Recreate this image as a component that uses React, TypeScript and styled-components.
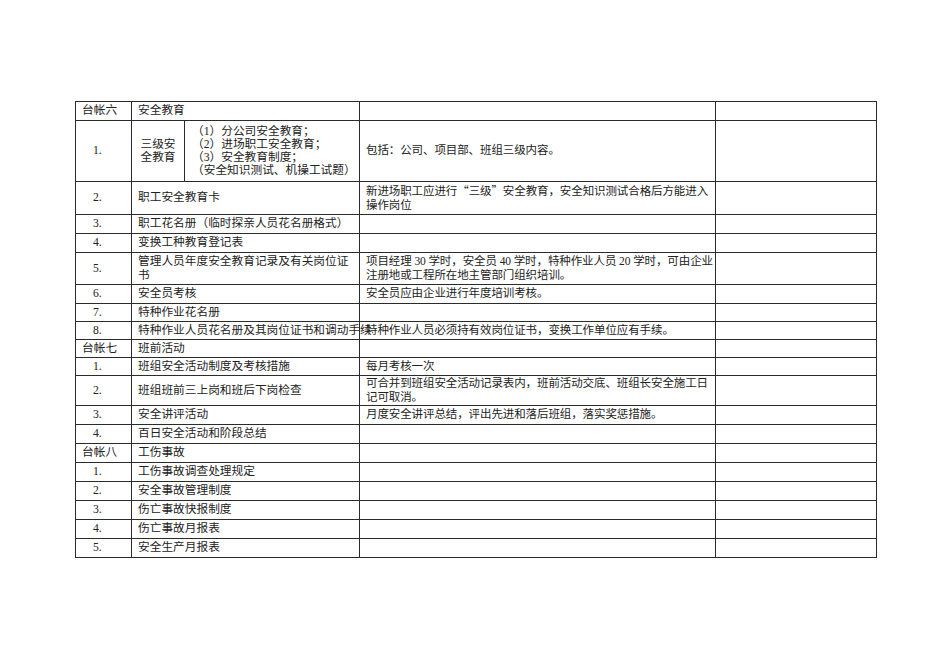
import styled, { createGlobalStyle } from 'styled-components'

const GlobalStyle = createGlobalStyle`
  html, body {
    margin: 0;
    padding: 0;
    background: #ffffff;
  }
  body {
    font-family: "Liberation Serif", "Noto Sans CJK SC", serif;
    color: #222222;
  }
`

interface Item {
  name: string[]
  note?: string[]
  height: number
}

interface Section {
  label: string
  title: string
  height: number
  items: Item[]
}

const sections: Section[] = [
  {
    label: '台帐六',
    title: '安全教育',
    height: 19,
    items: [
      { name: [], note: ['包括：公司、项目部、班组三级内容。'], height: 61 },
      {
        name: ['职工安全教育卡'],
        note: ['新进场职工应进行“三级”安全教育，安全知识测试合格后方能进入', '操作岗位'],
        height: 33,
      },
      { name: ['职工花名册（临时探亲人员花名册格式）'], height: 19 },
      { name: ['变换工种教育登记表'], height: 19 },
      {
        name: ['管理人员年度安全教育记录及有关岗位证', '书'],
        note: ['项目经理 30 学时，安全员 40 学时，特种作业人员 20 学时，可由企业', '注册地或工程所在地主管部门组织培训。'],
        height: 32,
      },
      { name: ['安全员考核'], note: ['安全员应由企业进行年度培训考核。'], height: 19 },
      { name: ['特种作业花名册'], height: 18 },
      {
        name: ['特种作业人员花名册及其岗位证书和调动手续'],
        note: ['特种作业人员必须持有效岗位证书，变换工作单位应有手续。'],
        height: 18,
      },
    ],
  },
  {
    label: '台帐七',
    title: '班前活动',
    height: 18,
    items: [
      { name: ['班组安全活动制度及考核措施'], note: ['每月考核一次'], height: 18 },
      {
        name: ['班组班前三上岗和班后下岗检查'],
        note: ['可合并到班组安全活动记录表内，班前活动交底、班组长安全施工日', '记可取消。'],
        height: 30,
      },
      { name: ['安全讲评活动'], note: ['月度安全讲评总结，评出先进和落后班组，落实奖惩措施。'], height: 19 },
      { name: ['百日安全活动和阶段总结'], height: 19 },
    ],
  },
  {
    label: '台帐八',
    title: '工伤事故',
    height: 19,
    items: [
      { name: ['工伤事故调查处理规定'], height: 19 },
      { name: ['安全事故管理制度'], height: 19 },
      { name: ['伤亡事故快报制度'], height: 19 },
      { name: ['伤亡事故月报表'], height: 19 },
      { name: ['安全生产月报表'], height: 19 },
    ],
  },
]

const threeLevelList = [
  '（1）分公司安全教育；',
  '（2）进场职工安全教育；',
  '（3）安全教育制度；',
  '（安全知识测试、机操工试题）',
]

const Page = styled.div`
  padding: 101px 0 0 75px;
`

const Ledger = styled.table`
  border-collapse: collapse;
  table-layout: fixed;
  width: 801px;
  font-size: 11.7px;
  line-height: 13.5px;
`

const Row = styled.tr<{ $h: number }>`
  height: ${(p) => p.$h}px;
`

const Cell = styled.td`
  border: 1px solid #2b2b2b;
  padding: 0 2px 0 6px;
  vertical-align: middle;
  text-align: left;
  white-space: nowrap;
  overflow: visible;
`

const NumberCell = styled(Cell)`
  padding-left: 17px;
`

const SubjectCell = styled(Cell)`
  text-align: center;
  padding: 0 2px;
`

const ListCell = styled(Cell)`
  padding-left: 7px;
  line-height: 13.2px;
`

const NoteCell = styled(Cell)`
  font-size: 11.5px;
  letter-spacing: -0.1px;
`

const Line = styled.div`
  display: block;
`

// full-width curly quotes as in the printed form
const Quote = styled.span`
  font-family: "Noto Sans CJK SC", sans-serif;
`

function renderText(text: string) {
  return text.split(/([“”])/).map((part, i) =>
    part === '“' || part === '”' ? <Quote key={i}>{part}</Quote> : part,
  )
}

function Lines({ lines }: { lines?: string[] }) {
  if (!lines || lines.length === 0) return null
  return (
    <>
      {lines.map((l, i) => (
        <Line key={i}>{renderText(l)}</Line>
      ))}
    </>
  )
}

function SectionRows({ section }: { section: Section }) {
  return (
    <>
      <Row $h={section.height}>
        <Cell>{section.label}</Cell>
        <Cell colSpan={2}>{section.title}</Cell>
        <Cell />
        <Cell />
      </Row>
      {section.items.map((item, i) => (
        <Row key={i} $h={item.height}>
          <NumberCell>{i + 1}.</NumberCell>
          {item.name.length === 0 ? (
            <>
              <SubjectCell>
                <Line>三级安</Line>
                <Line>全教育</Line>
              </SubjectCell>
              <ListCell>
                <Lines lines={threeLevelList} />
              </ListCell>
            </>
          ) : (
            <Cell colSpan={2}>
              <Lines lines={item.name} />
            </Cell>
          )}
          <NoteCell>
            <Lines lines={item.note} />
          </NoteCell>
          <Cell />
        </Row>
      ))}
    </>
  )
}

export default function App() {
  return (
    <Page>
      <GlobalStyle />
      <Ledger>
        <colgroup>
          <col style={{ width: 56 }} />
          <col style={{ width: 53 }} />
          <col style={{ width: 175 }} />
          <col style={{ width: 356 }} />
          <col style={{ width: 161 }} />
        </colgroup>
        <tbody>
          {sections.map((s) => (
            <SectionRows key={s.label} section={s} />
          ))}
        </tbody>
      </Ledger>
    </Page>
  )
}
